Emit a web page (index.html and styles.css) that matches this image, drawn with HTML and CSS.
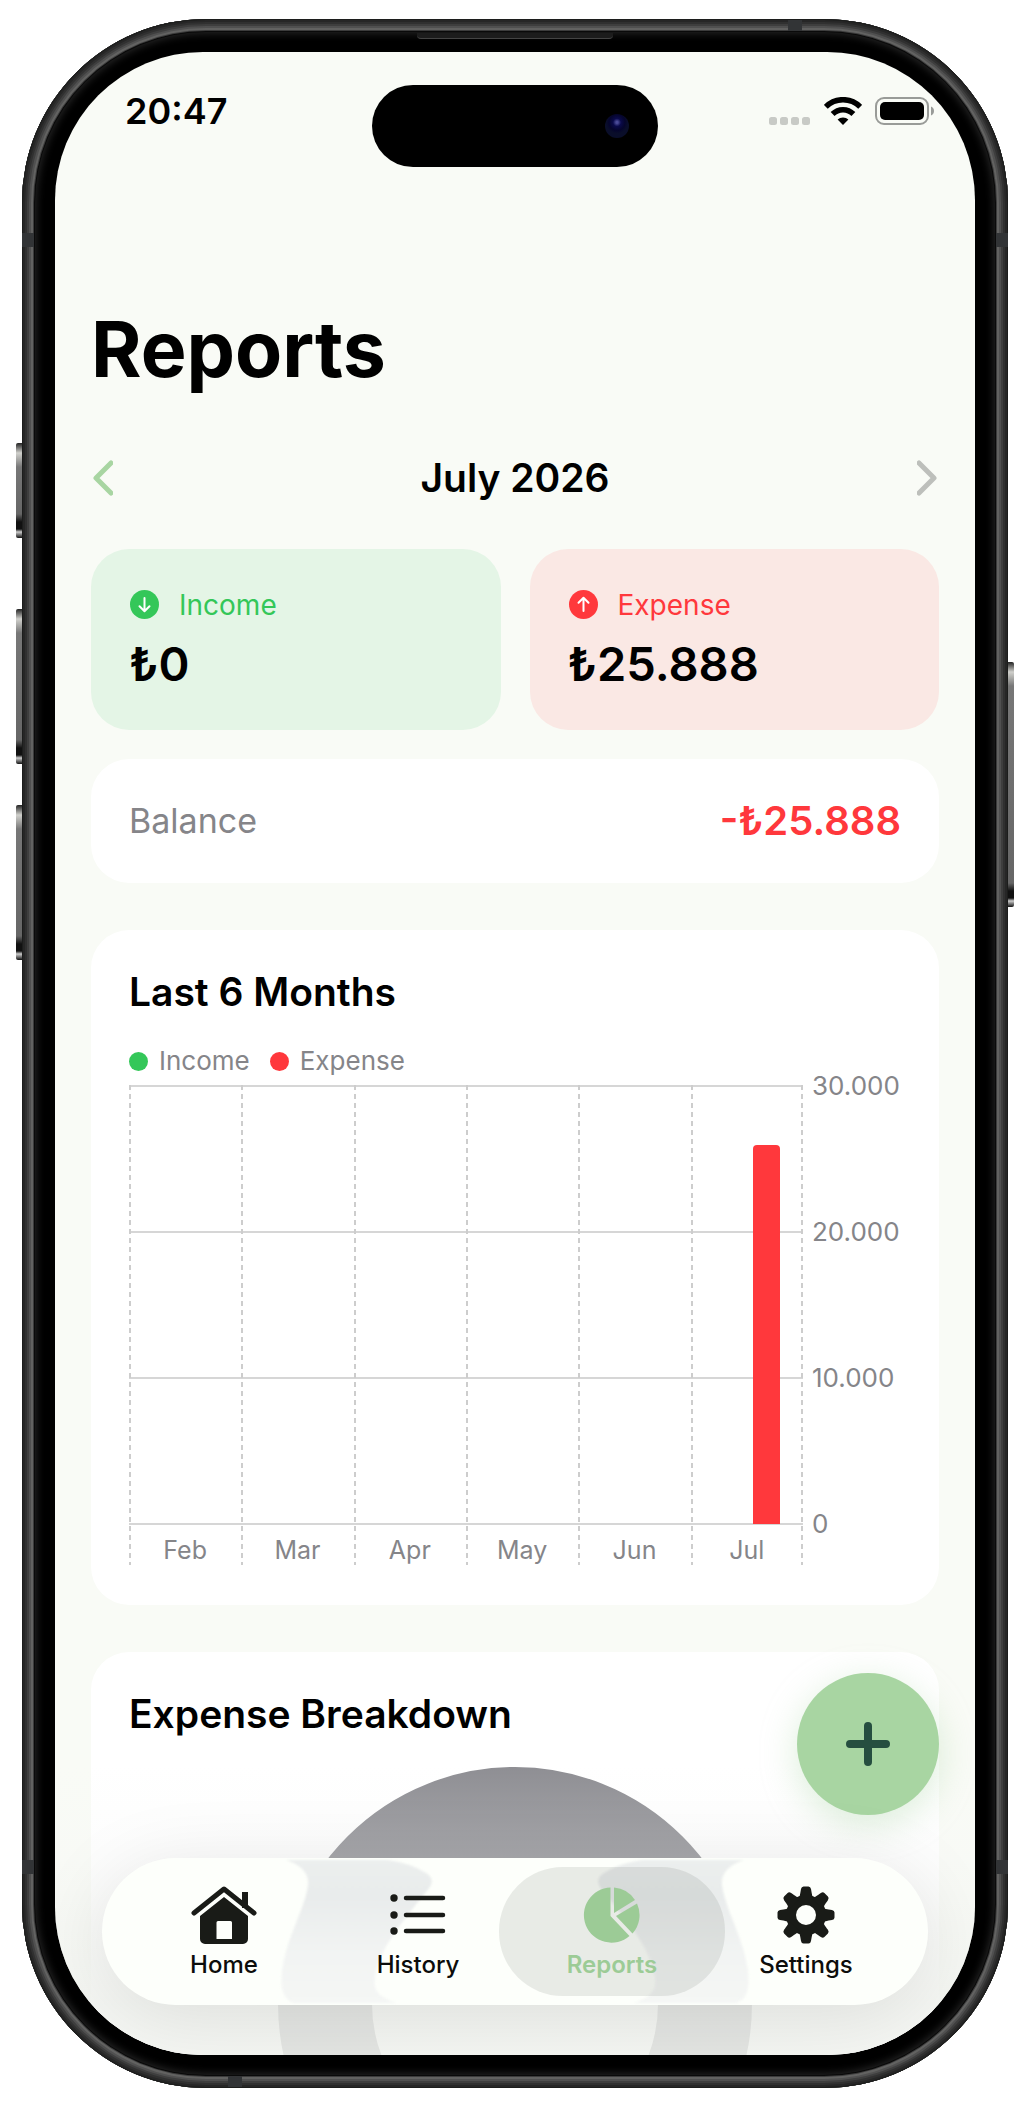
FILE: index.html
```html
<!DOCTYPE html>
<html lang="en">
<head>
    <meta charset="UTF-8">
    <meta name="viewport" content="width=device-width, initial-scale=1.0">
    <title>Reports</title>
    <link rel="stylesheet" href="styles.css">
</head>
<body>
    <div class="phone">
        <!-- Hardware details -->
        <span class="side-button action"></span>
        <span class="side-button volume-up"></span>
        <span class="side-button volume-down"></span>
        <span class="side-button power"></span>
        <span class="antenna left top"></span>
        <span class="antenna right top"></span>
        <span class="antenna left bottom"></span>
        <span class="antenna right bottom"></span>
        <span class="antenna upper"></span>
        <span class="antenna lower"></span>
        <span class="speaker"></span>

        <div class="bezel">
            <div class="screen">
                <header class="status-bar">
                    <span class="clock">20:47</span>
                    <div class="island"><span class="camera"></span></div>
                    <div class="status-icons">
                        <svg class="signal" width="42" height="8" viewBox="0 0 42 8" fill="#c8cac6">
                            <rect width="8" height="8" rx="2.5"/>
                            <rect x="11" width="8" height="8" rx="2.5"/>
                            <rect x="22" width="8" height="8" rx="2.5"/>
                            <rect x="33" width="8" height="8" rx="2.5"/>
                        </svg>
                        <svg class="wifi" width="38" height="28" viewBox="0 0 38 28">
                            <g fill="none" stroke="#000" stroke-width="5.5">
                                <path d="M1.8 9.8A24.3 24.3 0 0 1 36.2 9.8"/>
                                <path d="M8.6 17A14.7 14.7 0 0 1 29.4 17"/>
                            </g>
                            <path d="M19 28l-5.4-5.4a7.7 7.7 0 0 1 10.8 0z"/>
                        </svg>
                        <svg class="battery" width="60" height="28" viewBox="0 0 60 28">
                            <rect x="1" y="1" width="52" height="26" rx="8" fill="none" stroke="#999b98" stroke-width="2"/>
                            <rect x="5" y="5" width="44" height="18" rx="5"/>
                            <path d="M56 9.5c4 1.5 4 7.500 0 9z" fill="#999b98"/>
                        </svg>
                    </div>
                </header>

                <main class="content">
                    <h1>Reports</h1>

                    <div class="month-picker">
                        <button class="month-prev" type="button" aria-label="Previous month">
                            <svg width="22" height="36" viewBox="0 0 22 36"><path d="M20 3L5 18l15 15"/></svg>
                        </button>
                        <span class="month-name">July 2026</span>
                        <button class="month-next" type="button" aria-label="Next month">
                            <svg width="22" height="36" viewBox="0 0 22 36"><path d="M2 3l15 15L2 33"/></svg>
                        </button>
                    </div>

                    <div class="summary">
                        <div class="summary-card income">
                            <div class="summary-label">
                                <svg width="30" height="30" viewBox="0 0 30 30"><circle cx="15.500" cy="14.500" r="14.500"/><path d="M15.500 8v13M10.500 16.200l5 5 5-5"/></svg>
                                Income
                            </div>
                            <div class="amount">₺0</div>
                        </div>
                        <div class="summary-card expense">
                            <div class="summary-label">
                                <svg width="30" height="30" viewBox="0 0 30 30"><circle cx="15.500" cy="14.500" r="14.500"/><path d="M15.500 21V8M10.500 12.800l5-5 5 5"/></svg>
                                Expense
                            </div>
                            <div class="amount">₺25.888</div>
                        </div>
                    </div>

                    <div class="card balance">
                        <span class="balance-label">Balance</span>
                        <span class="balance-value">-₺25.888</span>
                    </div>

                    <section class="card section">
                        <h2>Last 6 Months</h2>
                        <div class="legend">
                            <span class="legend-item income">Income</span>
                            <span class="legend-item expense">Expense</span>
                        </div>
                        <div class="chart">
                            <div class="plot">
                                <div class="month"><div class="bars"></div><span>Feb</span></div>
                                <div class="month"><div class="bars"></div><span>Mar</span></div>
                                <div class="month"><div class="bars"></div><span>Apr</span></div>
                                <div class="month"><div class="bars"></div><span>May</span></div>
                                <div class="month"><div class="bars"></div><span>Jun</span></div>
                                <div class="month">
                                    <div class="bars">
                                        <div class="bar income" style="height: 0%"></div>
                                        <div class="bar expense" style="height: 86.29%"></div>
                                    </div>
                                    <span>Jul</span>
                                </div>
                            </div>
                            <div class="y-axis">
                                <span>30.000</span>
                                <span>20.000</span>
                                <span>10.000</span>
                                <span>0</span>
                            </div>
                        </div>
                    </section>

                    <section class="card section">
                        <h2>Expense Breakdown</h2>
                        <svg class="donut" width="474" height="474" viewBox="0 0 474 474">
                            <circle cx="237" cy="237" r="190" fill="none" stroke="#8e8e93" stroke-width="94"/>
                        </svg>
                    </section>
                </main>

                <div class="fade"></div>

                <button class="add-button" type="button" aria-label="Add">
                    <svg width="44" height="44" viewBox="0 0 44 44"><path d="M22 4v36M4 22h36"/></svg>
                </button>

                <nav class="tab-bar">
                    <!-- Donut seen through the glass -->
                    <svg class="glass" viewBox="0 0 826 146" preserveAspectRatio="none">
                        <defs>
                            <linearGradient id="smoke" x1="0" y1="0" x2="0" y2="1">
                                <stop offset="0" stop-color="#ecefee"/>
                                <stop offset="0.25" stop-color="#e9ecec"/>
                                <stop offset="0.65" stop-color="#f2f4f3"/>
                                <stop offset="1" stop-color="#f5f7f5"/>
                            </linearGradient>
                        </defs>
                        <g fill="url(#smoke)">
                            <path d="M184 2C200 7 207 16 206 26C204 48 184 80 180 112C178 130 181 141 192 144H294C276 138 271 131 273 118C278 88 302 62 322 36C332 26 332 20 324 15C315 9 301 4 286 2Z"/>
                            <path d="M642 2C626 7 619 16 620 26C622 48 642 80 646 112C648 130 645 141 634 144H532C550 138 555 131 553 118C548 88 524 62 504 36C494 26 494 20 502 15C511 9 525 4 540 2Z"/>
                        </g>
                    </svg>
                    <a class="tab" href="#home">
                        <svg width="66" height="58" viewBox="0 0 66 58">
                            <g fill="none" stroke="#191b17" stroke-linecap="round" stroke-linejoin="round">
                                <path d="M3 27L33 3l30 24" stroke-width="5"/>
                                <path d="M54 9v10" stroke-width="6" stroke-linecap="square"/>
                            </g>
                            <path fill="#191b17" fill-rule="evenodd" d="M33 11L57 30V53a5 5 0 0 1-5 5H14a5 5 0 0 1-5-5V30ZM27 35a1.500 1.500 0 0 0-1.500 1.500V53H41V36.500A1.500 1.500 0 0 0 39.500 35Z"/>
                        </svg>
                        Home
                    </a>
                    <a class="tab" href="#history">
                        <svg width="58" height="58" viewBox="0 0 58 58">
                            <g fill="#191b17">
                                <circle cx="5" cy="12" r="3.700"/>
                                <circle cx="5" cy="29" r="3.700"/>
                                <circle cx="5" cy="45" r="3.700"/>
                            </g>
                            <path d="M17 12h37M17 29h37M17 45h37" stroke="#191b17" stroke-width="4.500" stroke-linecap="round"/>
                        </svg>
                        History
                    </a>
                    <a class="tab active" href="#reports">
                        <svg width="58" height="58" viewBox="0 0 58 58" fill="#9ccb96">
                            <path d="M27.500 1.500V30L46.500 50A27.600 27.600 0 1 1 27.500 1.500Z"/>
                            <path d="M31 1.500A27.600 27.600 0 0 1 52 14L31 27Z"/>
                            <path d="M54 17.500A27.600 27.600 0 0 1 49.500 47.500L33 30Z"/>
                        </svg>
                        <span>Reports</span>
                    </a>
                    <a class="tab" href="#settings">
                        <svg width="58" height="58" viewBox="0 0 58 58">
                            <defs>
                                <path id="tooth" d="M21 13C23 11 23 8 24 3Q24.500 .500 26.500 .500H31.500Q33.500 .500 34 3C35 8 35 11 37 13Z"/>
                            </defs>
                            <circle cx="29" cy="29" r="15" fill="none" stroke="#191b17" stroke-width="10"/>
                            <g fill="#191b17">
                                <use href="#tooth"/>
                                <use href="#tooth" transform="rotate(45 29 29)"/>
                                <use href="#tooth" transform="rotate(90 29 29)"/>
                                <use href="#tooth" transform="rotate(135 29 29)"/>
                                <use href="#tooth" transform="rotate(180 29 29)"/>
                                <use href="#tooth" transform="rotate(225 29 29)"/>
                                <use href="#tooth" transform="rotate(270 29 29)"/>
                                <use href="#tooth" transform="rotate(315 29 29)"/>
                            </g>
                        </svg>
                        Settings
                    </a>
                </nav>
            </div>
        </div>
    </div>
</body>
</html>
```
FILE: styles.css
```css
* {
    margin: 0;
    padding: 0;
    box-sizing: border-box;
}

body {
    height: 100vh;
    padding: 19px 22px 20px;
    background: #fff;
    font-family: Inter, "Liberation Sans", sans-serif;
    color: #000;
}

button {
    border: none;
    background: none;
    cursor: pointer;
}

svg {
    display: block;
    flex-shrink: 0;
}

/* Phone frame */
.phone {
    position: relative;
    height: 100%;
    padding: 13px;
    border-radius: 184px;
    background: #0a0a0a;
    box-shadow:
        inset 0 0 0 1px #1c1d1c,
        inset 0 0 0 3px #262626,
        inset 0 0 0 5px #303030,
        inset 0 0 0 7px #3e3e3e,
        inset 0 0 0 9px #505050,
        inset 0 0 0 11px #626261,
        inset 0 0 0 12px #3c3c3c;
}

.bezel {
    height: 100%;
    padding: 20px;
    border-radius: 171px;
    background: #000;
    box-shadow: inset 0 0 8px 1px #2a2a2a;
}

.screen {
    position: relative;
    display: flex;
    flex-direction: column;
    height: 100%;
    overflow: hidden;
    border-radius: 148px;
    background: #f9fbf6;
}

.side-button {
    position: absolute;
    left: -6px;
    width: 6px;
    border-radius: 2px 0 0 2px;
    background: linear-gradient(#222, #d0d0cc 10px, #777 24px, #666 calc(100% - 24px), #111 calc(100% - 16px), #111 calc(100% - 9px), #ccc calc(100% - 6px), #111);
}

.action {
    top: 424px;
    height: 95px;
}

.volume-up {
    top: 590px;
    height: 155px;
}

.volume-down {
    top: 786px;
    height: 155px;
}

.power {
    top: 643px;
    left: auto;
    right: -6px;
    height: 245px;
    border-radius: 0 2px 2px 0;
}

.antenna {
    position: absolute;
    width: 12px;
    height: 14px;
    background: #323436;
}

.antenna.left {
    left: 0;
}

.antenna.right {
    right: 0;
}

.antenna.top {
    top: 214px;
}

.antenna.bottom {
    bottom: 214px;
}

.antenna.upper {
    top: 1px;
    right: 206px;
    width: 14px;
    height: 11px;
}

.antenna.lower {
    bottom: 1px;
    left: 206px;
    width: 14px;
    height: 11px;
}

.speaker {
    position: absolute;
    top: 14px;
    left: 50%;
    width: 196px;
    height: 6px;
    margin-left: -98px;
    border-bottom: 1px solid #444;
    border-radius: 0 0 4px 4px;
    background: #1c1c1c;
}

/* Status bar */
.status-bar {
    display: flex;
    flex-shrink: 0;
    align-items: center;
    justify-content: space-between;
    height: 118px;
    padding: 0 40px 0 70px;
}

.clock {
    font-size: 36px;
    font-weight: 600;
}

.island {
    position: absolute;
    top: 33px;
    left: 50%;
    width: 286px;
    height: 82px;
    margin-left: -143px;
    border-radius: 41px;
    background: #000;
}

.camera {
    position: absolute;
    top: 29px;
    right: 29px;
    width: 24px;
    height: 24px;
    border-radius: 50%;
    background: radial-gradient(circle at 50% 35%, #4a4a98 0 1px, #0a0a4a 4px, #05052c 8px, #0a0e2a 11px);
}

.status-icons {
    display: flex;
    align-items: center;
    gap: 13px;
}

.signal {
    align-self: flex-end;
}

/* Page content */
.content {
    flex: 1;
    min-height: 0;
    padding: 133px 36px 0;
    overflow: hidden;
}

h1 {
    font-size: 77px;
    line-height: 92px;
    font-weight: 700;
}

h2 {
    font-size: 39px;
    line-height: 48px;
    font-weight: 600;
}

.month-picker {
    display: flex;
    align-items: center;
    justify-content: space-between;
    margin: 59px 0 47px;
    fill: none;
    stroke-width: 5;
    stroke-linecap: round;
    stroke-linejoin: round;
}

.month-name {
    font-size: 39px;
    line-height: 48px;
    font-weight: 600;
}

.month-prev {
    stroke: #a8d5a2;
}

.month-next {
    stroke: #bdbfbb;
}

.summary {
    display: grid;
    grid-template-columns: 1fr 1fr;
    gap: 29px;
}

.summary-card {
    padding: 38px;
    border-radius: 38px;
}

.summary-card.income {
    background: #e4f5e6;
}

.summary-card.expense {
    background: #fae8e4;
}

.summary-label {
    display: flex;
    align-items: center;
    gap: 20px;
    margin-bottom: 13px;
    font-size: 28px;
    line-height: 36px;
}

.summary-label path {
    fill: none;
    stroke: #fff;
    stroke-width: 2;
    stroke-linecap: round;
    stroke-linejoin: round;
}

.income .summary-label {
    color: #34c759;
    fill: #34c759;
}

.expense .summary-label {
    color: #ff383c;
    fill: #ff383c;
}

.amount {
    font-size: 47px;
    line-height: 56px;
    font-weight: 600;
}

.card {
    padding: 38px;
    border-radius: 38px;
    background: #fff;
}

.balance {
    display: flex;
    align-items: center;
    justify-content: space-between;
    margin-top: 29px;
    line-height: 48px;
}

.balance-label {
    font-size: 34px;
    color: #858589;
}

.balance-value {
    font-size: 40px;
    font-weight: 600;
    color: #ff383c;
}

.section {
    margin-top: 47px;
}

/* Bar chart */
.legend {
    display: flex;
    gap: 20px;
    margin: 29px 0 8px;
}

.legend-item {
    display: flex;
    align-items: center;
    gap: 11px;
    font-size: 26px;
    line-height: 32px;
    color: #858589;
}

.legend-item::before {
    content: '';
    width: 19px;
    height: 19px;
    border-radius: 50%;
    background: #34c759;
}

.legend-item.expense::before {
    background: #ff383c;
}

.chart {
    display: flex;
    margin-bottom: 2px;
    font-size: 26px;
    line-height: 30px;
    color: #858589;
}

.plot {
    flex: 1;
    display: grid;
    grid-template-columns: repeat(6, 1fr);
    background:
        repeating-linear-gradient(#cdcdcd 0 5px, transparent 5px 9px) right / 2px 100% no-repeat,
        repeating-linear-gradient(#d6d6d6 0 2px, transparent 2px 146px) top / 100% 440px no-repeat;
}

.month {
    display: flex;
    flex-direction: column;
    align-items: center;
    background: repeating-linear-gradient(#cdcdcd 0 5px, transparent 5px 9px) left / 2px 100% no-repeat;
    font-size: 25px;
}

.bars {
    display: flex;
    align-items: flex-end;
    gap: 12px;
    height: 439px;
    margin-bottom: 11px;
}

.bar {
    width: 27px;
    border-radius: 4px 4px 0 0;
}

.bar.expense {
    background: #ff383c;
}

.y-axis {
    display: flex;
    flex-direction: column;
    justify-content: space-between;
    width: 98px;
    height: 468px;
    margin-top: -14px;
    padding-left: 9px;
}

/* Breakdown */
.donut {
    margin: 29px auto 0;
}

.fade {
    position: absolute;
    left: 0;
    right: 0;
    bottom: 0;
    height: 290px;
    background: linear-gradient(rgba(246, 248, 245, 0), rgba(246, 247, 246, 0.24) 92px, rgba(243, 245, 241, 0.85) 235px, rgba(243, 245, 241, 0.85));
}

.add-button {
    position: absolute;
    right: 36px;
    bottom: 240px;
    display: flex;
    align-items: center;
    justify-content: center;
    width: 142px;
    height: 142px;
    border-radius: 50%;
    background: #a8d5a2;
    box-shadow: 0 9px 36px rgba(168, 213, 162, 0.4);
    stroke: #264e40;
    stroke-width: 8;
    stroke-linecap: round;
}

/* Tab bar */
.tab-bar {
    position: absolute;
    left: 47px;
    right: 47px;
    bottom: 50px;
    display: flex;
    height: 147px;
    padding: 0 25px;
    border-radius: 74px;
    background: #fdfffb;
    box-shadow: 0 12px 80px rgba(0, 0, 0, 0.1);
}

.glass {
    position: absolute;
    inset: 0;
    width: 100%;
    height: 100%;
    filter: blur(1px);
}

.tab {
    position: relative;
    flex: 1;
    display: flex;
    flex-direction: column;
    align-items: center;
    gap: 7px;
    padding-top: 28px;
    font-size: 24px;
    line-height: 28px;
    font-weight: 500;
    color: #0c0d0b;
    text-decoration: none;
}

.tab.active {
    font-weight: 600;
    color: #9ccb96;
}

.tab.active::before {
    content: '';
    position: absolute;
    inset: 9px -16px;
    border-radius: 64px;
    background: rgba(60, 70, 60, 0.11);
}

.tab svg,
.tab span {
    position: relative;
}
```
